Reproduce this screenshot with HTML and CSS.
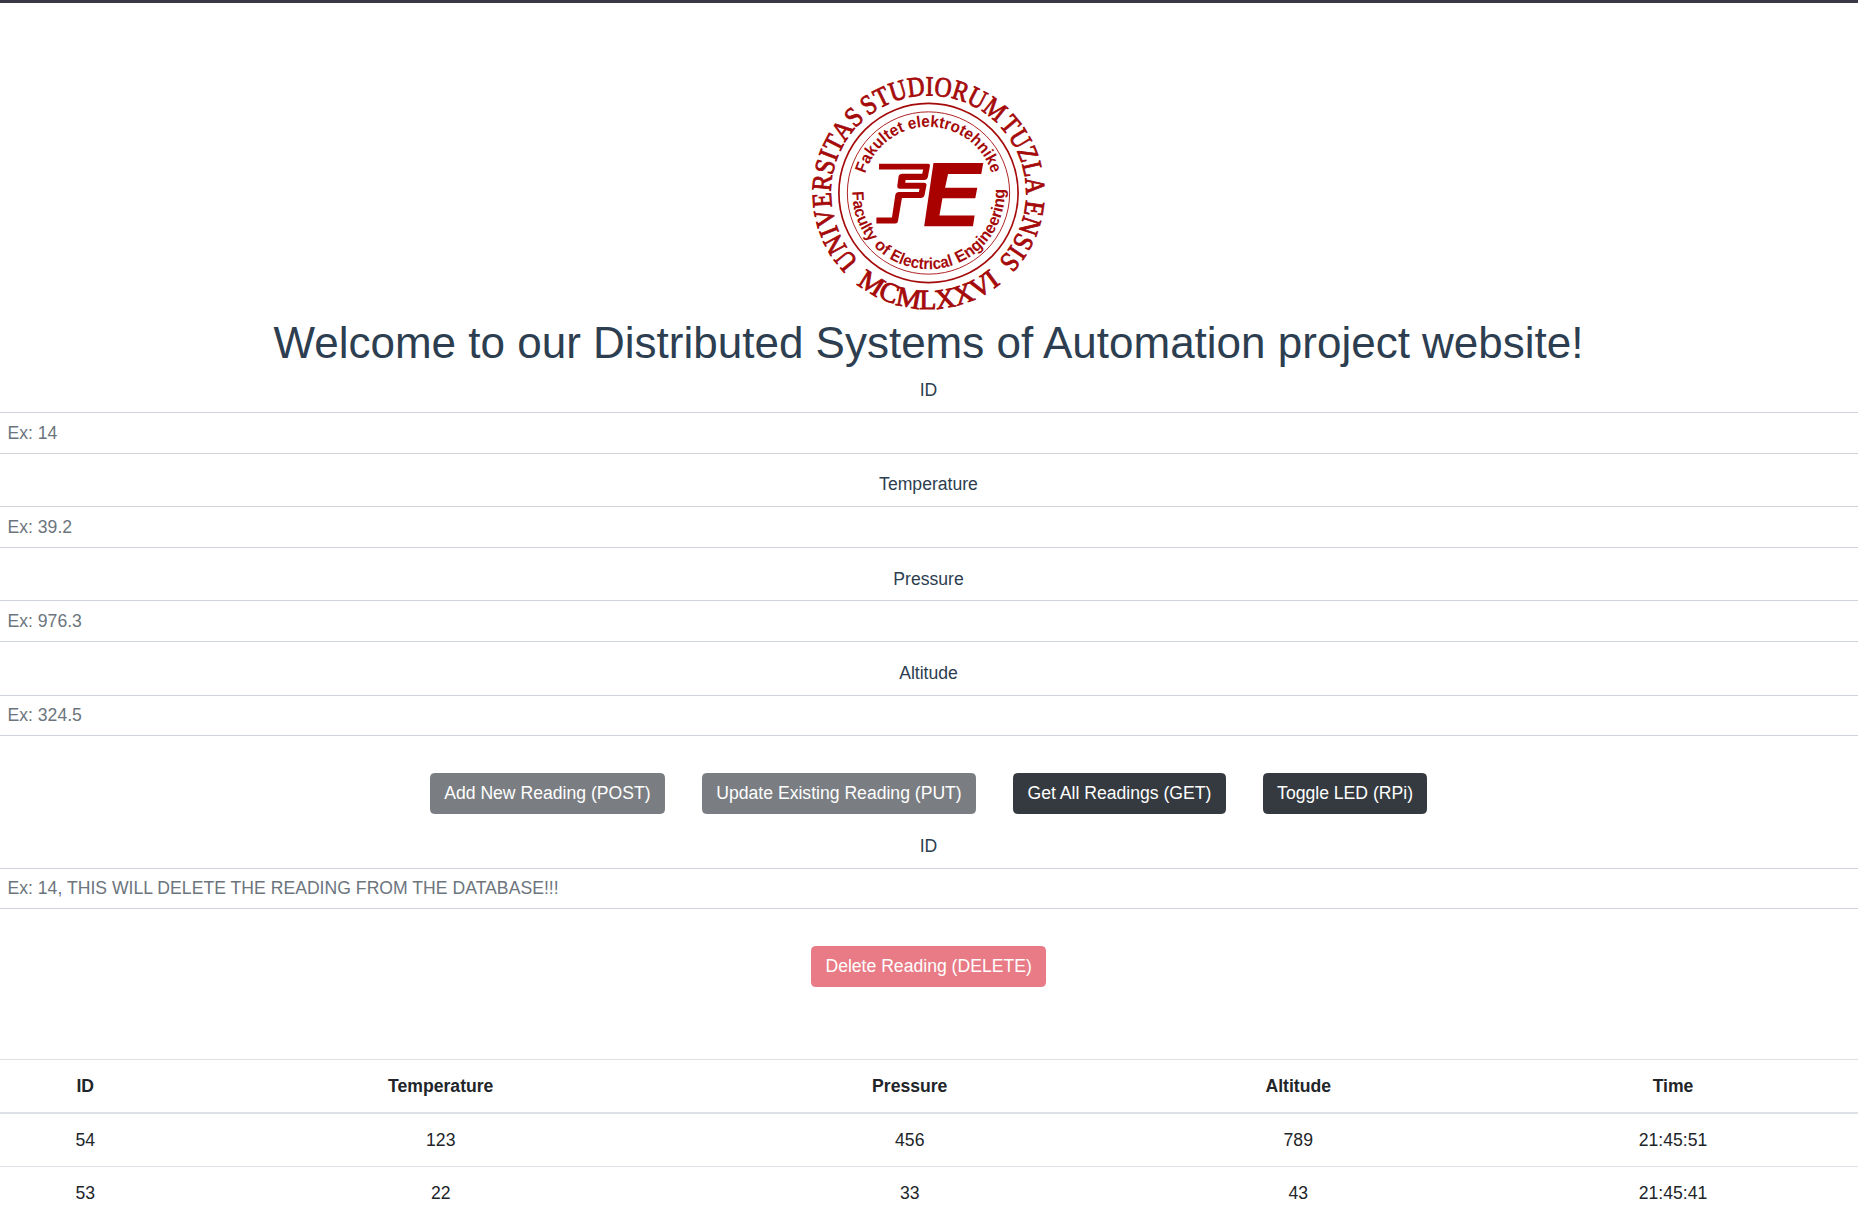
FILE: index.html
```html
<!DOCTYPE html>
<html lang="en">
<head>
<meta charset="utf-8">
<title>Distributed Systems of Automation</title>
<link rel="stylesheet" href="styles.css">
</head>
<body>
<main class="app">
  <svg class="logo" viewBox="-118 -118 236 236" role="img" aria-label="Faculty of Electrical Engineering Tuzla">
    <defs>
      <path id="outer" d="M0-98A98 98 0 0 1 0 98A98 98 0 0 1 0-98"/>
      <path id="outerLow" d="M0 116.500A116.500 116.500 0 0 0 0-116.500A116.500 116.500 0 0 0 0 116.500"/>
      <path id="inner" d="M0-66.500A66.500 66.500 0 0 1 0 66.500A66.500 66.500 0 0 1 0-66.500"/>
      <path id="innerLow" d="M0 76.500A76.500 76.500 0 0 0 0-76.500A76.500 76.500 0 0 0 0 76.500"/>
    </defs>
    <circle class="ring" r="90"/>
    <circle class="ring ring-thin" r="81.500"/>
    <g class="motto">
      <text transform="rotate(-134.500)" textLength="160.500" lengthAdjust="spacingAndGlyphs"><textPath href="#outer">UNIVERSITAS</textPath></text>
      <text transform="rotate(-38)" textLength="141" lengthAdjust="spacingAndGlyphs"><textPath href="#outer">STUDIORUM</textPath></text>
      <text transform="rotate(46)" textLength="77" lengthAdjust="spacingAndGlyphs"><textPath href="#outer">TUZLA</textPath></text>
      <text transform="rotate(94)" textLength="69" lengthAdjust="spacingAndGlyphs"><textPath href="#outer">ENSIS</textPath></text>
      <text transform="rotate(38.500)" textLength="157" lengthAdjust="spacingAndGlyphs"><textPath href="#outerLow">MCMLXXVI</textPath></text>
    </g>
    <g class="faculty">
      <text transform="rotate(-73)" textLength="60.500" lengthAdjust="spacingAndGlyphs"><textPath href="#inner">Fakultet</textPath></text>
      <text transform="rotate(-17)" textLength="104" lengthAdjust="spacingAndGlyphs"><textPath href="#inner">elektrotehnike</textPath></text>
      <text transform="rotate(91)" textLength="55" lengthAdjust="spacingAndGlyphs"><textPath href="#innerLow">Faculty</textPath></text>
      <text transform="rotate(46)" textLength="15.500" lengthAdjust="spacingAndGlyphs"><textPath href="#innerLow">of</textPath></text>
      <text transform="rotate(31)" textLength="67" lengthAdjust="spacingAndGlyphs"><textPath href="#innerLow">Electrical</textPath></text>
      <text transform="rotate(-23)" textLength="93.500" lengthAdjust="spacingAndGlyphs"><textPath href="#innerLow">Engineering</textPath></text>
    </g>
    <path class="mark" transform="translate(-57 -34.700) scale(.3333)" d="M22 16H170Q177 16 175 25L169 57Q167 65 159 65H102L101 73H157Q166 73 165 81L159 111Q157 119 149 119H91L79 189Q78 196 71 196H14V178H61L71 110Q73 101 82 101H142L144 91H85Q76 91 77 82L81 54Q83 46 92 46H152L155 33H22Z"/>
    <path class="mark" transform="translate(-69 -42.700) scale(.3333)" d="M222 38H372L366 71H266L257 112H354L348 144H249L240 196H346L341 228H194Z"/>
  </svg>
  <h1 class="title">Welcome to our Distributed Systems of Automation project website!</h1>
  <form class="form">
    <div class="field"><label class="label" for="id">ID</label><input class="input" id="id" placeholder="Ex: 14"></div>
    <div class="field"><label class="label" for="temp">Temperature</label><input class="input" id="temp" placeholder="Ex: 39.2"></div>
    <div class="field"><label class="label" for="pres">Pressure</label><input class="input" id="pres" placeholder="Ex: 976.3"></div>
    <div class="field"><label class="label" for="alt">Altitude</label><input class="input" id="alt" placeholder="Ex: 324.5"></div>
  </form>
  <div class="actions">
    <button class="btn btn-dark" disabled>Add New Reading (POST)</button>
    <button class="btn btn-dark" disabled>Update Existing Reading (PUT)</button>
    <button class="btn btn-dark">Get All Readings (GET)</button>
    <button class="btn btn-dark">Toggle LED (RPi)</button>
  </div>
  <form class="form">
    <div class="field"><label class="label" for="del">ID</label><input class="input" id="del" placeholder="Ex: 14, THIS WILL DELETE THE READING FROM THE DATABASE!!!"></div>
  </form>
  <div class="actions">
    <button class="btn btn-danger" disabled>Delete Reading (DELETE)</button>
  </div>
  <table class="table">
    <colgroup><col class="c-id"><col class="c-temp"><col class="c-pres"><col class="c-alt"><col></colgroup>
    <thead><tr><th>ID</th><th>Temperature</th><th>Pressure</th><th>Altitude</th><th>Time</th></tr></thead>
    <tbody>
      <tr><td>54</td><td>123</td><td>456</td><td>789</td><td>21:45:51</td></tr>
      <tr><td>53</td><td>22</td><td>33</td><td>43</td><td>21:45:41</td></tr>
    </tbody>
  </table>
</main>
</body>
</html>
```
FILE: styles.css
```css
* { box-sizing: border-box; }
html { height: 100%; overflow: hidden; }
body {
  margin: 0;
  height: 100%;
  overflow: hidden;
  border-top: 3px solid #383847;
  background: #fff;
  color: #2c3e50;
  font: 17.6px/26.4px "Liberation Sans", Arial, sans-serif;
  text-align: center;
}
.app { padding-top: 72px; }
.logo { display: block; width: 236px; height: 236px; margin: 0 auto; padding-right: 1px; overflow: visible; }
.ring { fill: none; stroke: #a50a0a; stroke-width: 1.7; }
.ring-thin { stroke-width: .9; }
.motto { fill: #a50a0a; stroke: #a50a0a; stroke-width: .9; font: 28px "Liberation Serif", serif; }
.faculty { fill: #a50a0a; font: bold 16.4px "Liberation Sans", sans-serif; }
.mark { fill: #a90000; }
.title { margin: 0; padding: 6.3px 1px 6.75px 0; font-size: 44px; line-height: 52.8px; font-weight: 400; }
.field { margin-bottom: 17.4px; }
.label { display: block; margin-bottom: 8.4px; padding: .4px 1px 0 0; }
.input {
  display: block;
  width: 100%;
  height: 41.6px;
  padding: 7.4px 7.4px 6.6px;
  border: solid #ced4da;
  border-width: 1px 0;
  background: #fff;
  color: #495057;
  font: inherit;
  letter-spacing: .02px;
}
.input::placeholder { color: #6c757d; opacity: 1; }
.actions { display: flex; justify-content: center; gap: 37.4px; margin-top: 37px; margin-bottom: 18.2px; padding-right: .8px; }
.btn { padding: 6px 13.2px 6.8px; border: 1px solid; border-radius: 4.4px; color: #fff; font: inherit; height: 41.2px; }
.btn-dark { background: #343a40; border-color: #343a40; }
.btn-danger { background: #dc3545; border-color: #dc3545; }
.btn:disabled { opacity: .65; }
.table { width: 100%; margin-top: 72px; table-layout: fixed; border-collapse: collapse; color: #212529; }
.c-id { width: 170.5px; }
.c-temp { width: 540.5px; }
.c-pres { width: 397.5px; }
.c-alt { width: 379.5px; }
.table th, .table td { height: 53px; padding: 0 13.2px; border-top: 1px solid #dee2e6; }
.table thead th { height: 53.5px; padding-top: 0; border-bottom: 2px solid #dee2e6; }
```
